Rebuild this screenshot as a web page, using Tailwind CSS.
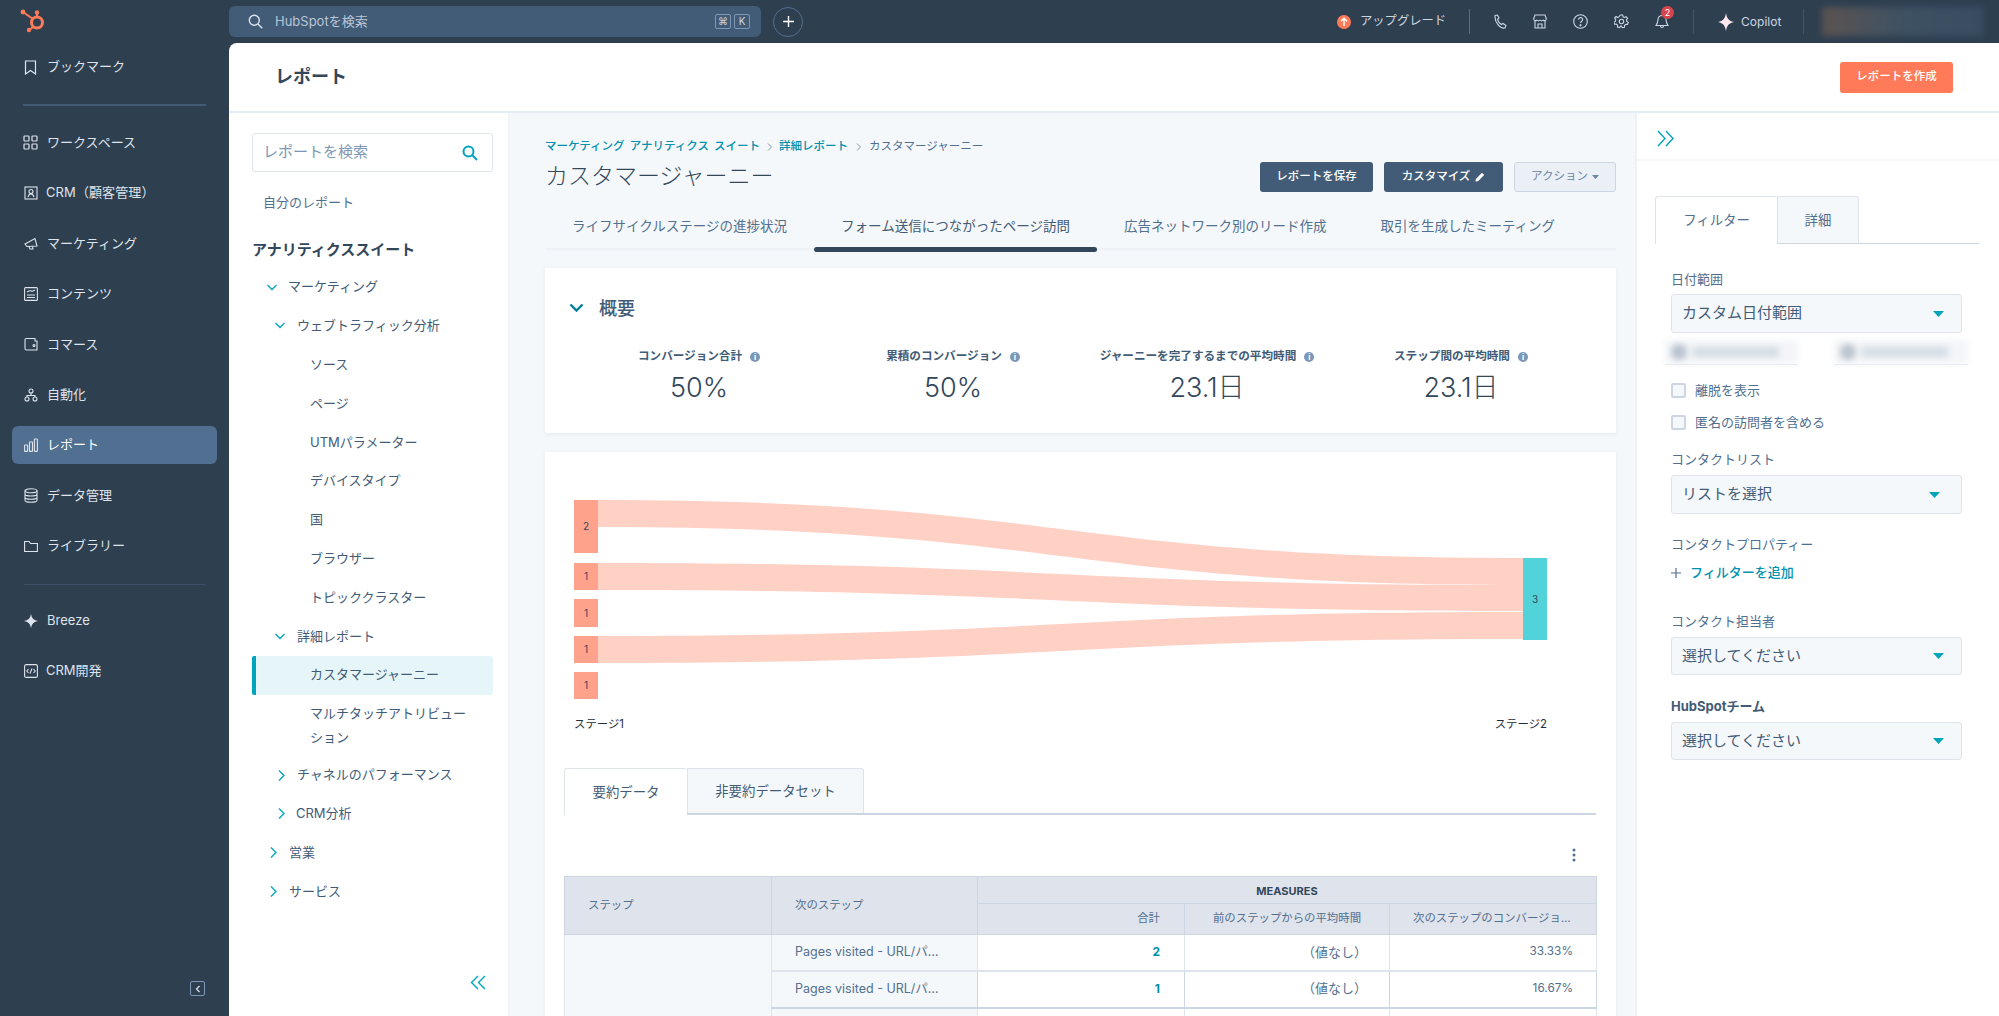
<!DOCTYPE html>
<html lang="ja">
<head>
    <meta charset="UTF-8">
    <meta name="viewport" content="width=device-width, initial-scale=1.0">
    <title>カスタマージャーニー - HubSpot</title>
    <script src="https://cdn.jsdelivr.net/npm/@tailwindcss/browser@4"></script>
</head>
<body class="h-screen overflow-hidden bg-[#2e3f50] font-['Inter','Noto_Sans_CJK_JP',sans-serif] text-[#33475b]">
<div class="flex h-[1016px] w-[1999px]">

    <!-- Global nav -->
    <nav class="flex w-[229px] shrink-0 flex-col text-[13px] text-[#dfe3eb]">
        <div class="h-[42px] pl-[20px] pt-[8px]">
            <svg width="26" height="26" viewBox="20 8 26 26" fill="none" stroke="#ff7a59">
                <circle cx="37" cy="22.5" r="5.5" stroke-width="3"/>
                <path d="M23 12 L33 19 M37 13 V17 M29.5 30 L33.5 26.5" stroke-width="2"/>
                <circle cx="23" cy="12" r="2.4" fill="#ff7a59" stroke="none"/>
                <circle cx="37" cy="12.5" r="2.2" fill="#ff7a59" stroke="none"/>
                <circle cx="29" cy="30" r="2.2" fill="#ff7a59" stroke="none"/>
            </svg>
        </div>
        <a class="flex h-[50px] items-center gap-[10px] pl-[24px]">
            <svg width="13" height="15" viewBox="0 0 13 15" fill="none" stroke="#dfe3eb" stroke-width="1.2"><path d="M1.5 1h10v13l-5-3.5-5 3.5z"/></svg>
            <span>ブックマーク</span>
        </a>
        <div class="mx-[23px] mt-[12px] h-[1.5px] bg-[#425b76]"></div>
        <div class="mt-[12px] flex flex-col">
            <a class="flex h-[50.4px] items-center gap-[9px] pl-[23px]">
                <svg width="15" height="15" viewBox="0 0 15 15" fill="none" stroke="#dfe3eb" stroke-width="1.2"><rect x="1" y="1" width="5" height="5" rx=".8"/><rect x="9" y="1" width="5" height="5" rx=".8"/><rect x="1" y="9" width="5" height="5" rx=".8"/><rect x="9" y="9" width="5" height="5" rx=".8"/></svg>
                <span>ワークスペース</span>
            </a>
            <a class="flex h-[50.4px] items-center gap-[8px] pl-[24px]">
                <svg width="14" height="14" viewBox="0 0 14 14" fill="none" stroke="#dfe3eb" stroke-width="1.1"><rect x="1" y="1" width="12" height="12"/><circle cx="7" cy="5.5" r="2"/><path d="M4 11c.5-2 1.5-3 3-3s2.500 1 3 3"/></svg>
                <span class="tracking-[0.1px]">CRM（顧客管理）</span>
            </a>
            <a class="flex h-[50.4px] items-center gap-[9px] pl-[24px]">
                <svg width="14" height="14" viewBox="0 0 14 14" fill="none" stroke="#dfe3eb" stroke-width="1.1"><path d="M1 8 11 2.500 13 10 3 10.500z"/><path d="M5 10.500 6 13h3l-.5-2.500"/></svg>
                <span>マーケティング</span>
            </a>
            <a class="flex h-[50.4px] items-center gap-[9px] pl-[24px]">
                <svg width="14" height="14" viewBox="0 0 14 14" fill="none" stroke="#dfe3eb" stroke-width="1.1"><rect x=".6" y=".6" width="12.800" height="12.800" rx="1"/><path d="M3 5l3-1.500 2 1 3-1.500M3 8h8M3 10.500h8"/></svg>
                <span>コンテンツ</span>
            </a>
            <a class="flex h-[50.4px] items-center gap-[9px] pl-[24px]">
                <svg width="14" height="14" viewBox="0 0 14 14" fill="none" stroke="#dfe3eb" stroke-width="1.1"><path d="M1 3a1.500 1.500 0 0 1 1.500-1.500H11V4H13V13H2.500A1.500 1.500 0 0 1 1 11.500z"/><circle cx="10" cy="8.500" r="1"/></svg>
                <span>コマース</span>
            </a>
            <a class="flex h-[50.4px] items-center gap-[9px] pl-[24px]">
                <svg width="14" height="14" viewBox="0 0 14 14" fill="none" stroke="#dfe3eb" stroke-width="1.1"><circle cx="7" cy="3" r="2"/><circle cx="3" cy="11" r="2"/><circle cx="11" cy="11" r="2"/><path d="M7 5v2M3 9V7.500h8V9"/></svg>
                <span>自動化</span>
            </a>
            <a class="relative flex h-[50.4px] items-center gap-[9px] pl-[24px]">
                <span class="absolute left-[12px] right-[12px] top-[6px] h-[38px] rounded-md bg-[#516f90]"></span>
                <svg class="relative" width="14" height="14" viewBox="0 0 14 14" fill="none" stroke="#dfe3eb" stroke-width="1.1"><rect x=".6" y="7" width="3" height="6.400" rx=".5"/><rect x="5.500" y="4" width="3" height="9.400" rx=".5"/><rect x="10.400" y="1" width="3" height="12.400" rx=".5"/></svg>
                <span class="relative text-white">レポート</span>
            </a>
            <a class="flex h-[50.4px] items-center gap-[9px] pl-[24px]">
                <svg width="14" height="15" viewBox="0 0 14 15" fill="none" stroke="#dfe3eb" stroke-width="1.1"><ellipse cx="7" cy="2.800" rx="6" ry="2"/><path d="M1 2.800v9.400c0 1.100 2.700 2 6 2s6-.9 6-2V2.800M1 6c0 1.100 2.700 2 6 2s6-.9 6-2M1 9.200c0 1.100 2.700 2 6 2s6-.9 6-2"/></svg>
                <span>データ管理</span>
            </a>
            <a class="flex h-[50.4px] items-center gap-[9px] pl-[24px]">
                <svg width="14" height="14" viewBox="0 0 14 14" fill="none" stroke="#dfe3eb" stroke-width="1.1"><path d="M.6 2.500h4.500l1.500 2h6.800v8H.6z"/></svg>
                <span>ライブラリー</span>
            </a>
        </div>
        <div class="mx-[24px] mt-[13px] h-px bg-[#3c5068]"></div>
        <a class="mt-[11px] flex h-[50px] items-center gap-[9px] pl-[24px]">
            <svg width="14" height="14" viewBox="0 0 14 14" fill="#dfe3eb"><path d="M7 0Q7.800 6.200 14 7 7.800 7.800 7 14 6.200 7.800 0 7 6.200 6.200 7 0z"/></svg>
            <span>Breeze</span>
        </a>
        <a class="flex h-[50px] items-center gap-[8px] pl-[24px]">
            <svg width="14" height="14" viewBox="0 0 14 14" fill="none" stroke="#dfe3eb" stroke-width="1.1"><rect x=".6" y=".6" width="12.800" height="12.800" rx="1.500"/><path d="M4.500 5 2.800 7l1.700 2M9.500 5l1.700 2-1.700 2M8 4.500 6 9.500"/></svg>
            <span>CRM開発</span>
        </a>
        <div class="mt-auto flex justify-end pb-[20px] pr-[24px]">
            <span class="flex h-[15px] w-[15px] items-center justify-center rounded-[2px] border border-[#7c98b6]">
                <svg width="6" height="8" viewBox="0 0 6 8" fill="none" stroke="#dfe3eb" stroke-width="1.200"><path d="M4.500 1 1.500 4l3 3"/></svg>
            </span>
        </div>
    </nav>

    <div class="flex min-w-0 flex-1 flex-col">
        <!-- Top bar -->
        <header class="flex h-[43px] shrink-0 items-center text-[12px] text-[#cbd6e2]">
            <div class="flex h-[31px] w-[532px] items-center rounded-md bg-[#425b76] pl-[19px] pr-[11px]">
                <svg width="15" height="15" viewBox="0 0 15 15" fill="none" stroke="#dfe3eb" stroke-width="1.400"><circle cx="6.300" cy="6.300" r="5"/><path d="M10 10l4.200 4.200"/></svg>
                <span class="ml-[12px] text-[13px] text-[#b9c8d8]">HubSpotを検索</span>
                <span class="ml-auto flex gap-[3px] text-[10px]">
                    <span class="flex h-[15px] w-[16px] items-center justify-center rounded-[2px] border border-[#7c98b6]">⌘</span>
                    <span class="flex h-[15px] w-[16px] items-center justify-center rounded-[2px] border border-[#7c98b6]">K</span>
                </span>
            </div>
            <span class="ml-[12px] flex h-[30px] w-[30px] items-center justify-center rounded-full border border-[#516f90]">
                <svg width="11" height="11" viewBox="0 0 11 11" stroke="#fff" stroke-width="1.400"><path d="M5.500 0v11M0 5.500h11"/></svg>
            </span>
            <div class="ml-[534px] flex items-center">
                <span class="flex h-[14px] w-[14px] items-center justify-center rounded-full bg-[#ff7a59]">
                    <svg width="8" height="9" viewBox="0 0 8 9" fill="none" stroke="#fff" stroke-width="1.500"><path d="M4 9V1.500M1 4.300 4 1.300l3 3"/></svg>
                </span>
                <span class="ml-[9px] text-[12.300px]">アップグレード</span>
                <span class="ml-[23px] h-[25px] w-px bg-[#516f90]"></span>
                <svg class="ml-[23px]" width="14" height="15" viewBox="0 0 14 15" fill="none" stroke="#cbd6e2" stroke-width="1.100"><path d="M2 1.500l2.500-.5 1.500 3-1.500 1.500c.5 2 2 4 4 5l1.500-1 3 2-1 2.500c-5 1-10.500-6-10-12.500z"/></svg>
                <svg class="ml-[26px]" width="14" height="15" viewBox="0 0 14 15" fill="none" stroke="#cbd6e2" stroke-width="1.100"><path d="M2 1h10l1.400 4a2 2 0 0 1-3.200 1.200 2.500 2.500 0 0 1-3.200 0 2.500 2.500 0 0 1-3.200 0A2 2 0 0 1 .6 5zM2 7v7h10V7M5 14v-4h4v4"/></svg>
                <svg class="ml-[26px]" width="15" height="15" viewBox="0 0 15 15" fill="none" stroke="#cbd6e2" stroke-width="1.100"><circle cx="7.500" cy="7.500" r="6.800"/><path d="M5.500 5.800c0-3 4.300-2.700 4.200-.2 0 1.700-2.200 1.700-2.200 3.500"/><circle cx="7.500" cy="11.300" r=".6" fill="#cbd6e2"/></svg>
                <svg class="ml-[26px]" width="15" height="15" viewBox="0 0 15 15" fill="none" stroke="#cbd6e2" stroke-width="1.100"><circle cx="7.500" cy="7.500" r="2.200"/><path d="M6.300 1h2.400l.4 1.800 1.500.7 1.600-.9 1.400 1.700-1.100 1.400.3 1.800 1.500 1-.8 2-1.800-.2-1.200 1.200v1.800l-2.200.4-.9-1.600H6.600l-1 1.600-2.100-.6.100-1.800-1.200-1.200-1.800.1-.7-2.100 1.600-.9.200-1.700-1.200-1.400L2 2.500l1.600 1 1.500-.8z"/></svg>
                <span class="relative ml-[26px] flex">
                    <svg width="14" height="15" viewBox="0 0 14 15" fill="none" stroke="#cbd6e2" stroke-width="1.100"><path d="M7 1.500a4 4 0 0 0-4 4c0 3-1 4.500-2 6h12c-1-1.500-2-3-2-6a4 4 0 0 0-4-4zM5.500 12c0 2 3 2 3 0"/></svg>
                    <span class="absolute -top-[8px] left-[6px] flex h-[13px] w-[13px] items-center justify-center rounded-full bg-[#d9434e] text-[9px] text-white">2</span>
                </span>
                <span class="ml-[24px] h-[25px] w-px bg-[#3f566e]"></span>
                <svg class="ml-[24px]" width="16" height="18" viewBox="0 0 16 18" fill="#fde8ee"><path d="M8 0c.8 5 2.500 8 8 9-5.500 1-7.200 4-8 9-.8-5-2.500-8-8-9 5.500-1 7.200-4 8-9z"/></svg>
                <span class="ml-[7px]">Copilot</span>
                <span class="ml-[22px] h-[25px] w-px bg-[#3f566e]"></span>
                <span class="ml-[18px] h-[29px] w-[161px] bg-gradient-to-r from-[#5b5350] via-[#3e5163] to-[#3a4d60] blur-[3px]"></span>
            </div>
        </header>

        <!-- Main panel -->
        <div class="flex min-h-0 flex-1 flex-col overflow-hidden rounded-tl-lg bg-white">
            <div class="flex h-[70px] shrink-0 items-center justify-between border-b-2 border-[#e5ecf3] pl-[46px] pr-[46px]">
                <h1 class="-mt-[1px] text-[18px] font-bold">レポート</h1>
                <button class="h-[31px] w-[113px] rounded-[3px] bg-[#ff7a59] text-[11.5px] font-medium text-white">レポートを作成</button>
            </div>
            <div class="flex min-h-0 flex-1">

                <!-- Report sidebar -->
                <aside class="w-[281px] shrink-0 border-r-2 border-[#f0f3f7] pl-[23px] pr-[15px] pt-[20px] text-[13px] text-[#425b76]">
                    <div class="flex h-[39px] w-[241px] items-center justify-between rounded-[3px] border border-[#dfe3eb] pl-[10px] pr-[14px]">
                        <span class="text-[15px] text-[#7c98b6]">レポートを検索</span>
                        <svg width="16" height="16" viewBox="0 0 16 16" fill="none" stroke="#00a4bd" stroke-width="2"><circle cx="6.500" cy="6.500" r="5"/><path d="M10.500 10.500l4.500 4.500"/></svg>
                    </div>
                    <div class="mt-[11px] flex h-[38.8px] items-center pl-[11px] text-[#516f90]">自分のレポート</div>
                    <div class="mt-[10px] flex h-[36px] items-center text-[15px] font-bold text-[#33475b]">アナリティクススイート</div>
                    <div class="flex h-[38.8px] items-center pl-[15px]">
                        <svg class="mr-[11px]" width="10" height="7" viewBox="0 0 10 7" fill="none" stroke="#00a4bd" stroke-width="1.300"><path d="M.5 1 5 5.500 9.500 1"/></svg>マーケティング
                    </div>
                    <div class="flex h-[38.8px] items-center pl-[23px]">
                        <svg class="mr-[12px]" width="10" height="7" viewBox="0 0 10 7" fill="none" stroke="#00a4bd" stroke-width="1.300"><path d="M.5 1 5 5.500 9.500 1"/></svg>ウェブトラフィック分析
                    </div>
                    <div class="flex h-[38.8px] items-center pl-[58px]">ソース</div>
                    <div class="flex h-[38.8px] items-center pl-[58px]">ページ</div>
                    <div class="flex h-[38.8px] items-center pl-[58px]">UTMパラメーター</div>
                    <div class="flex h-[38.8px] items-center pl-[58px]">デバイスタイプ</div>
                    <div class="flex h-[38.8px] items-center pl-[58px]">国</div>
                    <div class="flex h-[38.8px] items-center pl-[58px]">ブラウザー</div>
                    <div class="flex h-[38.8px] items-center pl-[58px]">トピッククラスター</div>
                    <div class="flex h-[38.8px] items-center pl-[23px]">
                        <svg class="mr-[12px]" width="10" height="7" viewBox="0 0 10 7" fill="none" stroke="#00a4bd" stroke-width="1.300"><path d="M.5 1 5 5.500 9.500 1"/></svg>詳細レポート
                    </div>
                    <div class="flex h-[38.8px] items-center rounded-r-[3px] rounded-l-[2px] border-l-4 border-[#00a4bd] bg-[#e5f5f8] pl-[54px]">カスタマージャーニー</div>
                    <div class="py-[6.6px] pl-[58px] pr-[18px] leading-6">マルチタッチアトリビューション</div>
                    <div class="flex h-[38.8px] items-center pl-[26px]">
                        <svg class="mr-[12px]" width="7" height="11" viewBox="0 0 7 11" fill="none" stroke="#00a4bd" stroke-width="1.300"><path d="M1 .5 6 5.500 1 10.500"/></svg>チャネルのパフォーマンス
                    </div>
                    <div class="flex h-[38.8px] items-center pl-[26px]">
                        <svg class="mr-[11px]" width="7" height="11" viewBox="0 0 7 11" fill="none" stroke="#00a4bd" stroke-width="1.300"><path d="M1 .5 6 5.500 1 10.500"/></svg>CRM分析
                    </div>
                    <div class="flex h-[38.8px] items-center pl-[18px]">
                        <svg class="mr-[12px]" width="7" height="11" viewBox="0 0 7 11" fill="none" stroke="#00a4bd" stroke-width="1.300"><path d="M1 .5 6 5.500 1 10.500"/></svg>営業
                    </div>
                    <div class="flex h-[38.8px] items-center pl-[18px]">
                        <svg class="mr-[12px]" width="7" height="11" viewBox="0 0 7 11" fill="none" stroke="#00a4bd" stroke-width="1.300"><path d="M1 .5 6 5.500 1 10.500"/></svg>サービス
                    </div>
                    <div class="mt-[64px] flex justify-end pr-[7px]">
                        <svg width="16" height="15" viewBox="0 0 16 15" fill="none" stroke="#00a4bd" stroke-width="1.400"><path d="M8 1 1.500 7.500 8 14M15 1 8.500 7.500 15 14"/></svg>
                    </div>
                </aside>

                <!-- Report content -->
                <main class="w-[1125px] shrink-0 overflow-hidden bg-[#f5f8fa] pl-[35px] pr-[19px] pt-[26px]">
                    <div class="flex items-end justify-between">
                        <div>
                            <div class="flex h-[16px] items-center text-[11.500px] text-[#0091ae]">
                                <span class="font-medium [word-spacing:2px]">マーケティング アナリティクス スイート</span>
                                <svg class="mx-[7px]" width="5" height="8" viewBox="0 0 5 8" fill="none" stroke="#7c98b6"><path d="M1 .5 4.500 4 1 7.500"/></svg>
                                <span class="font-medium">詳細レポート</span>
                                <svg class="mx-[8px]" width="5" height="8" viewBox="0 0 5 8" fill="none" stroke="#7c98b6"><path d="M1 .5 4.500 4 1 7.500"/></svg>
                                <span class="text-[#516f90]">カスタマージャーニー</span>
                            </div>
                            <h2 class="mt-[6px] h-[31px] text-[23px] leading-[30px] font-light">カスタマージャーニー</h2>
                        </div>
                        <div class="flex gap-[11px] text-[11.5px] font-medium">
                            <button class="h-[30px] w-[113px] rounded-[3px] bg-[#425b76] text-white">レポートを保存</button>
                            <button class="flex h-[30px] w-[119px] items-center justify-center gap-[5px] rounded-[3px] bg-[#425b76] text-white">カスタマイズ
                                <svg width="10" height="10" viewBox="0 0 10 10" fill="#fff"><path d="M7 .8 9.200 3 3 9.200.5 9.500.8 7z"/></svg>
                            </button>
                            <button class="flex h-[30px] w-[102px] items-center justify-center gap-[4px] rounded-[3px] border border-[#cbd6e2] bg-[#eaf0f6] font-normal text-[#6a85a2]">アクション
                                <svg width="7" height="4" viewBox="0 0 7 4" fill="#6a85a2"><path d="M0 0h7L3.500 4z"/></svg>
                            </button>
                        </div>
                    </div>

                    <div class="flex h-[58px] border-b-2 border-[#eef2f6] text-[13.500px] text-[#516f90]">
                        <div class="flex h-full items-center px-[27px] pt-[12px]">ライフサイクルステージの進捗状況</div>
                        <div class="relative flex h-full items-center px-[27px] pt-[12px] text-[#425b76]">フォーム送信につながったページ訪問
                            <span class="absolute -bottom-[4px] left-0 right-0 h-[5px] rounded-[3px] bg-[#33475b]"></span>
                        </div>
                        <div class="flex h-full items-center px-[27px] pt-[12px]">広告ネットワーク別のリード作成</div>
                        <div class="flex h-full items-center px-[27px] pt-[12px]">取引を生成したミーティング</div>
                    </div>

                    <!-- Overview card -->
                    <section class="mt-[18px] h-[165px] w-[1071px] rounded-[2px] bg-white pt-[25px] shadow-[0_1px_4px_rgba(45,62,80,0.08)]">
                        <div class="flex h-[30px] items-center pl-[24px]">
                            <svg width="15" height="10" viewBox="0 0 15 10" fill="none" stroke="#00829b" stroke-width="2.400"><path d="M1.500 1.500 7.500 7.500 13.500 1.500"/></svg>
                            <span class="ml-[15px] text-[18px] font-medium text-[#425b76]">概要</span>
                        </div>
                        <div class="ml-[27px] mt-[26px] grid w-[1016px] grid-cols-4 text-center">
                            <div>
                                <div class="flex h-[16px] items-center justify-center gap-[8px] text-[11.600px] font-bold text-[#425b76]">コンバージョン合計<span class="flex h-[10px] w-[10px] items-center justify-center rounded-full bg-[#7c98b6] text-[8px] text-white">i</span></div>
                                <div class="mt-[6px] text-[27px] leading-[34px] font-light text-[#33475b]">50%</div>
                            </div>
                            <div>
                                <div class="flex h-[16px] items-center justify-center gap-[8px] text-[11.600px] font-bold text-[#425b76]">累積のコンバージョン<span class="flex h-[10px] w-[10px] items-center justify-center rounded-full bg-[#7c98b6] text-[8px] text-white">i</span></div>
                                <div class="mt-[6px] text-[27px] leading-[34px] font-light text-[#33475b]">50%</div>
                            </div>
                            <div>
                                <div class="flex h-[16px] items-center justify-center gap-[8px] text-[11.600px] font-bold text-[#425b76]">ジャーニーを完了するまでの平均時間<span class="flex h-[10px] w-[10px] items-center justify-center rounded-full bg-[#7c98b6] text-[8px] text-white">i</span></div>
                                <div class="mt-[6px] text-[27px] leading-[34px] font-light text-[#33475b]">23.1日</div>
                            </div>
                            <div>
                                <div class="flex h-[16px] items-center justify-center gap-[8px] text-[11.600px] font-bold text-[#425b76]">ステップ間の平均時間<span class="flex h-[10px] w-[10px] items-center justify-center rounded-full bg-[#7c98b6] text-[8px] text-white">i</span></div>
                                <div class="mt-[6px] text-[27px] leading-[34px] font-light text-[#33475b]">23.1日</div>
                            </div>
                        </div>
                    </section>

                    <!-- Journey card -->
                    <section class="mt-[19px] w-[1071px] bg-white pb-[40px] shadow-[0_1px_4px_rgba(45,62,80,0.08)]">
                        <svg class="block" width="1071" height="300" viewBox="545 452 1071 300">
                            <g fill="#ffd1c5">
                                <path d="M598 500 C1060 500 1060 558 1523 558 L1523 585 C1060 585 1060 527 598 527Z"/>
                                <path d="M598 563 C1060 563 1060 585 1523 585 L1523 611 C1060 611 1060 590 598 590Z"/>
                                <path d="M598 636 C1060 636 1060 612 1523 612 L1523 639 C1060 639 1060 663 598 663Z"/>
                            </g>
                            <g fill="#ffa28c">
                                <rect x="574" y="500" width="24" height="53"/>
                                <rect x="574" y="563" width="24" height="27"/>
                                <rect x="574" y="599" width="24" height="28"/>
                                <rect x="574" y="636" width="24" height="27"/>
                                <rect x="574" y="672" width="24" height="27"/>
                            </g>
                            <rect x="1523" y="558" width="24" height="82" fill="#51d3d9"/>
                            <g fill="#33475b" font-size="10" text-anchor="middle">
                                <text x="586" y="530">2</text>
                                <text x="586" y="580">1</text>
                                <text x="586" y="617">1</text>
                                <text x="586" y="653">1</text>
                                <text x="586" y="689">1</text>
                                <text x="1535" y="603">3</text>
                            </g>
                            <g fill="#1f2d3a" font-size="11.400">
                                <text x="574" y="728">ステージ1</text>
                                <text x="1547" y="728" text-anchor="end">ステージ2</text>
                            </g>
                        </svg>

                        <div class="mt-[16px] px-[19px]">
                            <div class="flex h-[47px] w-[1032px] border-b-2 border-[#cbd6e2] text-[13.400px] text-[#425b76]">
                                <div class="flex h-[47px] w-[123px] items-center justify-center rounded-t-[3px] border-l border-t border-[#dfe3eb] bg-white">要約データ</div>
                                <div class="flex h-[45px] w-[177px] items-center justify-center rounded-tr-[3px] border-r border-t border-l border-[#dfe3eb] bg-[#f5f8fa]">非要約データセット</div>
                            </div>
                            <div class="flex h-[61px] items-end justify-end pb-[14px] pr-[21px]">
                                <svg width="4" height="14" viewBox="0 0 4 14" fill="#516f90"><circle cx="2" cy="2" r="1.500"/><circle cx="2" cy="7" r="1.500"/><circle cx="2" cy="12" r="1.500"/></svg>
                            </div>
                            <table class="w-[1032px] table-fixed border-collapse text-[11.800px] text-[#516f90]">
                                <colgroup><col class="w-[207px]"><col class="w-[206px]"><col class="w-[207px]"><col class="w-[205px]"><col class="w-[207px]"></colgroup>
                                <thead class="bg-[#dfe3eb] text-[11.400px]">
                                    <tr class="h-[27px]">
                                        <th rowspan="2" class="border border-[#cbd6e2] pl-[23px] text-left font-normal">ステップ</th>
                                        <th rowspan="2" class="border border-[#cbd6e2] pl-[23px] text-left font-normal">次のステップ</th>
                                        <th colspan="3" class="border border-[#cbd6e2] pt-[2px] text-center text-[11px] font-bold text-[#33475b]">MEASURES</th>
                                    </tr>
                                    <tr class="h-[31px]">
                                        <th class="border border-[#cbd6e2] pr-[24px] text-right font-normal">合計</th>
                                        <th class="border border-[#cbd6e2] text-center font-normal">前のステップからの平均時間</th>
                                        <th class="truncate border border-[#cbd6e2] pl-[23px] pr-[20px] text-left font-normal">次のステップのコンバージョン率</th>
                                    </tr>
                                </thead>
                                <tbody>
                                    <tr class="h-[36px]">
                                        <td rowspan="3" class="border border-[#dfe3eb] bg-[#f5f8fa]"></td>
                                        <td class="border-x border-b-2 border-[#dfe3eb] bg-[#f5f8fa] pl-[23px] pr-[35px] text-[12.500px]"><div class="truncate">Pages visited - URL/パス名</div></td>
                                        <td class="border-x border-b-2 border-[#dfe3eb] pr-[24px] text-right text-[12px] font-bold text-[#0091ae]">2</td>
                                        <td class="border-x border-b-2 border-[#dfe3eb] pr-[22px] text-right text-[13px]">（値なし）</td>
                                        <td class="border-x border-b-2 border-[#dfe3eb] pr-[23px] text-right">33.33%</td>
                                    </tr>
                                    <tr class="h-[37px]">
                                        <td class="border-x border-b-2 border-[#cbd6e2] bg-[#f5f8fa] pl-[23px] pr-[35px] text-[12.500px]"><div class="truncate">Pages visited - URL/パス名</div></td>
                                        <td class="border-x border-b-2 border-[#cbd6e2] pr-[24px] text-right text-[12px] font-bold text-[#0091ae]">1</td>
                                        <td class="border-x border-b-2 border-[#cbd6e2] pr-[22px] text-right text-[13px]">（値なし）</td>
                                        <td class="border-x border-b-2 border-[#cbd6e2] pr-[23px] text-right">16.67%</td>
                                    </tr>
                                    <tr class="h-[37px]">
                                        <td class="border-x border-[#dfe3eb] bg-[#f5f8fa]"></td>
                                        <td class="border-x border-[#dfe3eb]"></td>
                                        <td class="border-x border-[#dfe3eb]"></td>
                                        <td class="border-x border-[#dfe3eb]"></td>
                                    </tr>
                                </tbody>
                            </table>
                        </div>
                    </section>
                </main>

                <!-- Filter panel -->
                <aside class="min-w-0 flex-1 border-l-2 border-[#eef2f6] text-[13px] text-[#516f90]">
                    <div class="flex h-[48px] items-center border-b-2 border-[#f5f8fa] pl-[20px] pt-[5px]">
                        <svg width="17" height="17" viewBox="0 0 17 17" fill="none" stroke="#00a4bd" stroke-width="1.400"><path d="M1 1l7 7.500L1 16M9 1l7 7.500L9 16"/></svg>
                    </div>
                    <div class="mt-[35px] flex h-[48px] w-[324px] ml-[18px] border-b border-[#cbd6e2] text-[13.400px]">
                        <div class="flex h-[48px] w-[122px] items-center justify-center rounded-t-[3px] border-l border-t border-[#dfe3eb] bg-white">フィルター</div>
                        <div class="flex h-[47px] w-[82px] items-center justify-center rounded-tr-[3px] border-x border-t border-[#dfe3eb] bg-[#f5f8fa]">詳細</div>
                    </div>
                    <div class="pl-[34px] pr-[36px]">
                        <label class="mt-[25px] block h-[20px] leading-[20px]">日付範囲</label>
                        <div class="mt-[5px] flex h-[39px] w-[291px] items-center justify-between rounded-[3px] border border-[#dfe3eb] bg-[#f5f8fa] pl-[10px] pr-[17px] text-[15px] text-[#425b76]">カスタム日付範囲
                            <svg width="11" height="6" viewBox="0 0 11 6" fill="#00a4bd"><path d="M0 0h11L5.500 6z"/></svg>
                        </div>
                        <div class="-ml-[6px] mt-[7px] flex h-[25px] w-[303px] justify-between">
                            <div class="w-[133px] border-b border-[#dfe3eb]"><div class="flex h-[24px] items-center gap-[6px] bg-[#f3f5f8] pl-[6px] blur-[3px]"><span class="h-[16px] w-[16px] rounded-full bg-[#b9c3ce]"></span><span class="h-[10px] w-[86px] bg-[#d5dce4]"></span></div></div>
                            <div class="w-[134px] border-b border-[#dfe3eb]"><div class="flex h-[24px] items-center gap-[6px] bg-[#f3f5f8] pl-[6px] blur-[3px]"><span class="h-[16px] w-[16px] rounded-full bg-[#b9c3ce]"></span><span class="h-[10px] w-[86px] bg-[#d5dce4]"></span></div></div>
                        </div>
                        <div class="mt-[18px] flex h-[15px] items-center">
                            <span class="h-[15px] w-[15px] rounded-[2px] border-2 border-[#cbd6e2] bg-[#f5f8fa]"></span>
                            <span class="ml-[9px]">離脱を表示</span>
                        </div>
                        <div class="mt-[17px] flex h-[15px] items-center">
                            <span class="h-[15px] w-[15px] rounded-[2px] border-2 border-[#cbd6e2] bg-[#f5f8fa]"></span>
                            <span class="ml-[9px]">匿名の訪問者を含める</span>
                        </div>
                        <label class="mt-[19px] block h-[20px] leading-[20px]">コンタクトリスト</label>
                        <div class="mt-[6px] flex h-[39px] w-[291px] items-center justify-between rounded-[3px] border border-[#dfe3eb] bg-[#f5f8fa] pl-[10px] pr-[21px] text-[15px] text-[#425b76]">リストを選択
                            <svg width="11" height="6" viewBox="0 0 11 6" fill="#00a4bd"><path d="M0 0h11L5.500 6z"/></svg>
                        </div>
                        <label class="mt-[20px] block h-[20px] leading-[20px]">コンタクトプロパティー</label>
                        <div class="mt-[9px] flex h-[20px] items-center font-medium text-[#0091ae]">
                            <svg width="10" height="10" viewBox="0 0 10 10" stroke="#516f90" stroke-width="1.200"><path d="M5 0v10M0 5h10"/></svg>
                            <span class="ml-[9px]">フィルターを追加</span>
                        </div>
                        <label class="mt-[28px] block h-[20px] leading-[20px]">コンタクト担当者</label>
                        <div class="mt-[6px] flex h-[38px] w-[291px] items-center justify-between rounded-[3px] border border-[#dfe3eb] bg-[#f5f8fa] pl-[10px] pr-[17px] text-[15px] text-[#425b76]">選択してください
                            <svg width="11" height="6" viewBox="0 0 11 6" fill="#00a4bd"><path d="M0 0h11L5.500 6z"/></svg>
                        </div>
                        <label class="mt-[21px] block h-[20px] font-bold leading-[20px] text-[#425b76]">HubSpotチーム</label>
                        <div class="mt-[6px] flex h-[38px] w-[291px] items-center justify-between rounded-[3px] border border-[#dfe3eb] bg-[#f5f8fa] pl-[10px] pr-[17px] text-[15px] text-[#425b76]">選択してください
                            <svg width="11" height="6" viewBox="0 0 11 6" fill="#00a4bd"><path d="M0 0h11L5.500 6z"/></svg>
                        </div>
                    </div>
                </aside>
            </div>
        </div>
    </div>
</div>
</body>
</html>
